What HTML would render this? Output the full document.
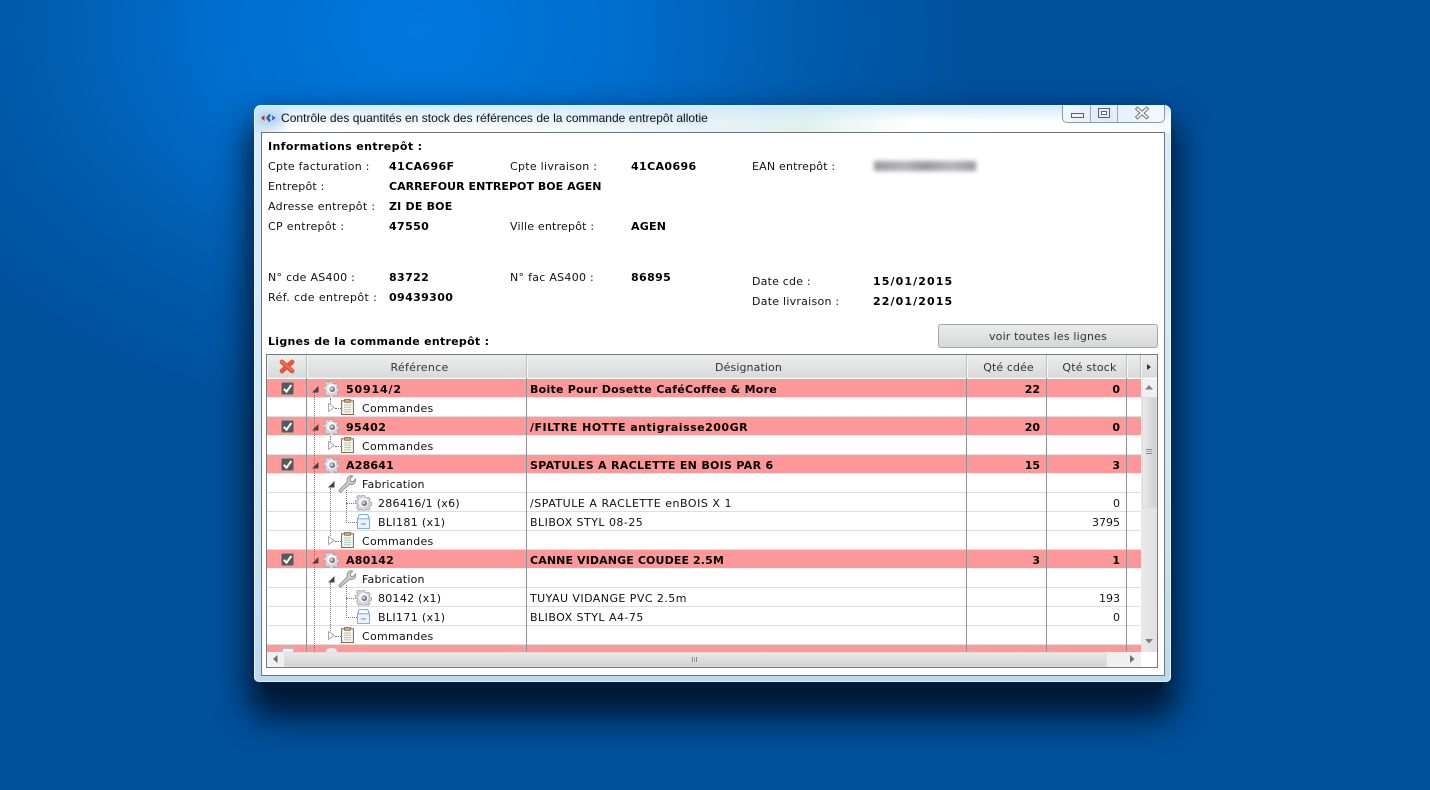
<!DOCTYPE html>
<html lang="fr"><head><meta charset="utf-8"><title>Contrôle</title>
<style>
*{box-sizing:border-box}
html,body{margin:0;padding:0;width:1430px;height:790px;overflow:hidden}
body{position:relative;font-family:"DejaVu Sans","Liberation Sans",sans-serif;font-size:11px;color:#111;
background:radial-gradient(ellipse 560px 400px at 420px 30px,#0078e0 0%,#006dcb 38%,#005aab 72%,rgba(0,81,159,0) 100%),#00509b}
.a{position:absolute}
.t{position:absolute;white-space:nowrap;line-height:14px;height:14px;margin-top:1px;letter-spacing:.28px}
.b{font-weight:bold;color:#000;letter-spacing:.38px}
#shadow{left:262px;top:120px;width:901px;height:572px;background:#001a38;box-shadow:0 12px 32px 14px rgba(0,18,42,.9);border-radius:10px}
#win{left:254px;top:105px;width:917px;height:577px;border-radius:7px 7px 5px 5px;background:linear-gradient(#d8eef9,#cfe6f5 60%,#bcdaef);box-shadow:inset 0 0 0 1px #e8f4fb}
#glass{left:255px;top:106px;width:915px;height:27px;border-radius:6px 6px 0 0;background:linear-gradient(rgba(205,232,248,.9) 0,rgba(255,255,255,0) 55%),linear-gradient(90deg,#cfe8f8 0,#ffffff 4%,#f6fbfd 30%,#e6f3f6 50%,#dff1ef 60%,#ffffff 72%,#f8fcfe 100%)}
#content{left:261px;top:132px;width:904px;height:544px;background:#fff;border:1px solid #6f7579}
#ctl{left:1062px;top:105px;width:103px;height:18px;border:1px solid #8d9aa3;border-top:0;border-radius:0 0 5px 5px;background:linear-gradient(90deg,#f2f9fd,#dbe9f8 45%,#e4f0fa 50%,#f4f9fc)}
#btn{left:938px;top:324px;width:220px;height:24px;border:1px solid #a6a6a6;border-radius:3px;background:linear-gradient(#ececec,#d6d7d8);text-align:center;line-height:24px;color:#333;letter-spacing:.17px}
#grid{left:266px;top:354px;width:892px;height:314px;border:1px solid #77797b;background:#fff}
.hd{position:absolute;top:355px;height:23px;padding-left:4px;background:linear-gradient(#ededed,#d8d9d9);border-right:1px solid #bfc0c2;box-shadow:inset 1px 0 0 #f6f6f6,inset 0 -1px 0 #e6e6e6;text-align:center;line-height:25px;color:#333;letter-spacing:.2px}
.row{position:absolute;left:267px;width:874px;height:19px}
.p{background:#ff9999;border-bottom:1px solid #f3f3f3}
.w{background:#fff;border-bottom:1px solid #dedede}
.v{position:absolute;top:378px;width:1px;height:274px;background:#8e9196}
.n{position:absolute;text-align:right;width:76px;left:964px;line-height:14px;white-space:nowrap;margin-top:1px;letter-spacing:0}
.n2{left:1044px}
.dv{position:absolute;width:0;border-left:1px dotted #777}
.dh{position:absolute;height:0;border-top:1px dotted #777}
svg{position:absolute;overflow:visible}
</style></head><body>
<svg width="0" height="0" style="position:absolute"><defs>
<symbol id="gear" viewBox="0 0 18 18"><path d="M7.400 .8h3.200l.5 2.400 1.500.7 2.200-1.200 2.200 2.300-1.200 2 .6 1.600 2.300.5v3.200l-2.300.5-.7 1.500 1.200 2.100-2.200 2.200-2.100-1.200-1.500.6-.5 2.300H7.400l-.5-2.300-1.500-.7-2.100 1.200L1 14.100l1.200-2-.6-1.500-2.300-.6V6.800l2.300-.5.7-1.500L1 2.700 3.200.5l2.200 1.200 1.500-.6z" transform="translate(.8 .8) scale(.9)" fill="#d4d4da" stroke="#9b9ba6" stroke-width=".8"/><circle cx="9" cy="9" r="5" fill="#f6f6f8"/><circle cx="9.800" cy="9.800" r="3" fill="#77777f"/><circle cx="9.200" cy="9.200" r="1.700" fill="#c8c8d0"/></symbol>
<symbol id="clip" viewBox="0 0 13 16"><rect x=".6" y="1.800" width="11.800" height="13.700" fill="#fbfbf4" stroke="#8a6248" stroke-width="1"/><rect x="3.600" y=".5" width="5.800" height="2.800" fill="#cfa77f" stroke="#7c5535" stroke-width=".7"/><path d="M3 6h7M3 8.300h7M3 10.600h7M3 12.900h7" stroke="#a8c4b4" stroke-width="1"/></symbol>
<symbol id="wr" viewBox="0 0 18 18"><path d="M2.500 17.200.8 15.500l8.400-8.600c-.5-2.500.2-4.400 2-5.500 1.200-.7 2.500-.8 3.700-.4l-2.700 2.700.5 2.400 2.300.5 2.600-2.600c.4 1.500 0 3-1.100 4.200-1.300 1.300-3 1.600-4.900 1z" fill="#cecece" stroke="#8c8c8c" stroke-width=".9"/></symbol>
<symbol id="box" viewBox="0 0 13 15"><path d="M2.300.6h8.400l1.700 3.900v9.900H.6V4.500z" fill="#fff" stroke="#6ba4f2" stroke-width="1"/><path d="M.6 4.800h11.800" stroke="#6ba4f2"/><rect x="1.300" y="5.500" width="10.400" height="8.300" fill="#eef4fe"/><rect x="4.200" y="9.300" width="4.600" height="1.300" fill="#6ba4f2"/></symbol>
<symbol id="chk" viewBox="0 0 13 13"><rect x=".5" y=".5" width="12" height="12" rx="1.500" fill="#55585c" stroke="#8a8a8a"/><path d="M2.800 6.800l2.700 2.900 4.800-6.700" fill="none" stroke="#fff" stroke-width="2"/></symbol>
<symbol id="ta" viewBox="0 0 7 7"><path d="M0 6.500 6.500 0v6.500z" fill="#444"/></symbol>
<symbol id="to" viewBox="0 0 7 9"><path d="M.5.500 6 4.500.5 8.500z" fill="#fff" stroke="#a9a9a9"/></symbol>
</defs></svg>

<div class="a" id="shadow"></div>
<div class="a" id="win"></div>
<div class="a" id="glass"></div>

<div class="a" style="left:258px;top:111px;width:24px;height:16px;background:#9fc4e6;filter:blur(4px);opacity:.6"></div>
<svg style="left:260px;top:113px" width="16" height="10" viewBox="0 0 16 10"><path d="M4.500 2 1 5l3.500 3z" fill="#d3202f"/><path d="M9.500 .5 6 5l3.500 4.500 1-2.500L9 5l1.500-2zM11.500 2l4 3-4 3 1-3z" fill="#1f5fae"/></svg>
<div class="t" style="left:281px;top:110px;font-family:'Liberation Sans',sans-serif;font-size:12px;color:#111;letter-spacing:.025px;text-shadow:0 1px 6px rgba(130,175,215,.45)">Contrôle des quantités en stock des références de la commande entrepôt allotie</div>

<div class="a" id="ctl"></div>
<div class="a" style="left:1090px;top:105px;width:1px;height:17px;background:#9aa7af"></div>
<div class="a" style="left:1117px;top:105px;width:1px;height:17px;background:#9aa7af"></div>
<div class="a" style="left:1071px;top:113px;width:13px;height:5px;border:1px solid #5f6469;background:#f2f2f2"></div>
<div class="a" style="left:1098px;top:108px;width:12px;height:10px;border:1px solid #5f6469;background:#e6edf2"></div>
<div class="a" style="left:1101px;top:111px;width:6px;height:4px;border:1px solid #5f6469;background:#fff"></div>
<svg style="left:1136px;top:108px" width="12" height="10" viewBox="0 0 12 10"><path d="M1.500 1 10.500 9M10.500 1 1.500 9" stroke="#6b7075" stroke-width="3.800" stroke-linecap="square"/><path d="M1.500 1 10.500 9M10.500 1 1.500 9" stroke="#f2f2f2" stroke-width="1.900" stroke-linecap="square"/></svg>

<div class="a" id="content"></div>

<div class="t b" style="left:268px;top:139px">Informations entrepôt :</div>
<div class="t" style="left:268px;top:159px">Cpte facturation :</div><div class="t b" style="left:389px;top:159px">41CA696F</div>
<div class="t" style="left:510px;top:159px">Cpte livraison :</div><div class="t b" style="left:631px;top:159px">41CA0696</div>
<div class="t" style="left:752px;top:159px;letter-spacing:.2px">EAN entrepôt :</div>
<div class="a" style="left:874px;top:161px;width:102px;height:10px;background:linear-gradient(90deg,#85858c,#a6a6ac 30%,#84848a 50%,#a8a8ae 75%,#86868c);filter:blur(2.500px);opacity:.85"></div>
<div class="t" style="left:268px;top:179px;letter-spacing:.2px">Entrepôt :</div><div class="t b" style="left:389px;top:179px;letter-spacing:.04px">CARREFOUR ENTREPOT BOE AGEN</div>
<div class="t" style="left:268px;top:199px;letter-spacing:.33px">Adresse entrepôt :</div><div class="t b" style="left:389px;top:199px;letter-spacing:.2px">ZI DE BOE</div>
<div class="t" style="left:268px;top:219px;letter-spacing:.33px">CP entrepôt :</div><div class="t b" style="left:389px;top:219px">47550</div>
<div class="t" style="left:510px;top:219px;letter-spacing:.2px">Ville entrepôt :</div><div class="t b" style="left:631px;top:219px;letter-spacing:.25px">AGEN</div>
<div class="t" style="left:268px;top:270px">N° cde AS400 :</div><div class="t b" style="left:389px;top:270px">83722</div>
<div class="t" style="left:510px;top:270px">N° fac AS400 :</div><div class="t b" style="left:631px;top:270px">86895</div>
<div class="t" style="left:752px;top:274px;letter-spacing:.2px">Date cde :</div><div class="t b" style="left:873px;top:274px;letter-spacing:1.1px">15/01/2015</div>
<div class="t" style="left:268px;top:290px;letter-spacing:.4px">Réf. cde entrepôt :</div><div class="t b" style="left:389px;top:290px">09439300</div>
<div class="t" style="left:752px;top:294px;letter-spacing:.25px">Date livraison :</div><div class="t b" style="left:873px;top:294px;letter-spacing:1.1px">22/01/2015</div>
<div class="t b" style="left:268px;top:334px;letter-spacing:.28px">Lignes de la commande entrepôt :</div>
<div class="a" id="btn">voir toutes les lignes</div>

<div class="a" id="grid"></div>
<div class="hd" style="left:267px;width:40px"></div>
<div class="hd" style="left:307px;width:220px;padding-left:6px;letter-spacing:.3px">Référence</div>
<div class="hd" style="left:527px;width:440px;letter-spacing:.1px">Désignation</div>
<div class="hd" style="left:967px;width:80px;letter-spacing:.1px">Qté cdée</div>
<div class="hd" style="left:1047px;width:80px;padding-left:6px">Qté stock</div>
<div class="hd" style="left:1127px;width:14px;padding:0"></div>
<div class="hd" style="left:1141px;width:16px;padding:0;border-right:0"></div>
<svg style="left:1147px;top:364px" width="4" height="6" viewBox="0 0 4 6"><path d="M0 0 4 3 0 6z" fill="#333"/></svg>
<svg style="left:279px;top:359px" width="16" height="15" viewBox="0 0 16 15"><path d="M3 3 13 12M13 3 3 12" stroke="#dd5a40" stroke-width="4.800" stroke-linecap="round"/><path d="M3 2.500 13 11.500" stroke="#ee8068" stroke-width="1.200" stroke-linecap="round"/></svg>

<!-- rows -->
<div class="row p" style="top:379px"></div><div class="row w" style="top:398px"></div>
<div class="row p" style="top:417px"></div><div class="row w" style="top:436px"></div>
<div class="row p" style="top:455px"></div><div class="row w" style="top:474px"></div>
<div class="row w" style="top:493px"></div><div class="row w" style="top:512px"></div>
<div class="row w" style="top:531px"></div><div class="row p" style="top:550px"></div>
<div class="row w" style="top:569px"></div><div class="row w" style="top:588px"></div>
<div class="row w" style="top:607px"></div><div class="row w" style="top:626px"></div>
<div class="row p" style="top:645px;height:7px;border:0"></div>

<div class="v" style="left:306px"></div><div class="v" style="left:526px"></div><div class="v" style="left:966px"></div><div class="v" style="left:1046px"></div><div class="v" style="left:1126px"></div>

<!-- tree lines -->
<div class="dv" style="left:314px;top:392px;height:260px"></div>
<div class="dv" style="left:330px;top:398px;height:6px"></div>
<div class="dv" style="left:330px;top:436px;height:6px"></div>
<div class="dv" style="left:330px;top:488px;height:48px"></div>
<div class="dv" style="left:330px;top:583px;height:48px"></div>
<div class="dv" style="left:346px;top:490px;height:33px"></div>
<div class="dv" style="left:346px;top:585px;height:33px"></div>
<div class="dh" style="left:335px;top:408px;width:6px"></div><div class="dh" style="left:335px;top:446px;width:6px"></div>
<div class="dh" style="left:335px;top:541px;width:6px"></div><div class="dh" style="left:335px;top:636px;width:6px"></div>
<div class="dh" style="left:346px;top:503px;width:10px"></div><div class="dh" style="left:346px;top:522px;width:11px"></div>
<div class="dh" style="left:346px;top:598px;width:10px"></div><div class="dh" style="left:346px;top:617px;width:11px"></div>

<!-- checks -->
<svg style="left:281px;top:382px" width="13" height="13"><use href="#chk"/></svg>
<svg style="left:281px;top:420px" width="13" height="13"><use href="#chk"/></svg>
<svg style="left:281px;top:458px" width="13" height="13"><use href="#chk"/></svg>
<svg style="left:281px;top:553px" width="13" height="13"><use href="#chk"/></svg>
<!-- arrows -->
<svg style="left:312px;top:386px" width="7" height="7"><use href="#ta"/></svg>
<svg style="left:312px;top:424px" width="7" height="7"><use href="#ta"/></svg>
<svg style="left:312px;top:462px" width="7" height="7"><use href="#ta"/></svg>
<svg style="left:312px;top:557px" width="7" height="7"><use href="#ta"/></svg>
<svg style="left:328px;top:481px" width="7" height="7"><use href="#ta"/></svg>
<svg style="left:328px;top:576px" width="7" height="7"><use href="#ta"/></svg>
<svg style="left:328px;top:403px" width="7" height="9"><use href="#to"/></svg>
<svg style="left:328px;top:441px" width="7" height="9"><use href="#to"/></svg>
<svg style="left:328px;top:536px" width="7" height="9"><use href="#to"/></svg>
<svg style="left:328px;top:631px" width="7" height="9"><use href="#to"/></svg>
<!-- icons -->
<svg style="left:323px;top:380px" width="17" height="17"><use href="#gear"/></svg>
<svg style="left:323px;top:418px" width="17" height="17"><use href="#gear"/></svg>
<svg style="left:323px;top:456px" width="17" height="17"><use href="#gear"/></svg>
<svg style="left:323px;top:551px" width="17" height="17"><use href="#gear"/></svg>
<svg style="left:355px;top:494px" width="17" height="17"><use href="#gear"/></svg>
<svg style="left:355px;top:589px" width="17" height="17"><use href="#gear"/></svg>
<svg style="left:341px;top:399px" width="13" height="16"><use href="#clip"/></svg>
<svg style="left:341px;top:437px" width="13" height="16"><use href="#clip"/></svg>
<svg style="left:341px;top:532px" width="13" height="16"><use href="#clip"/></svg>
<svg style="left:341px;top:627px" width="13" height="16"><use href="#clip"/></svg>
<svg style="left:338px;top:475px" width="18" height="18"><use href="#wr"/></svg>
<svg style="left:338px;top:570px" width="18" height="18"><use href="#wr"/></svg>
<svg style="left:357px;top:514px" width="13" height="15"><use href="#box"/></svg>
<svg style="left:357px;top:609px" width="13" height="15"><use href="#box"/></svg>

<!-- text -->
<div class="t b" style="left:346px;top:382px;letter-spacing:.85px">50914/2</div><div class="t b" style="left:530px;top:382px;letter-spacing:.25px">Boite Pour Dosette CaféCoffee &amp; More</div><div class="n b" style="top:382px;letter-spacing:0">22</div><div class="n n2 b" style="top:382px;letter-spacing:0">0</div>
<div class="t" style="left:362px;top:401px">Commandes</div>
<div class="t b" style="left:346px;top:420px;letter-spacing:.4px">95402</div><div class="t b" style="left:530px;top:420px;letter-spacing:.5px">/FILTRE HOTTE antigraisse200GR</div><div class="n b" style="top:420px;letter-spacing:0">20</div><div class="n n2 b" style="top:420px;letter-spacing:0">0</div>
<div class="t" style="left:362px;top:439px">Commandes</div>
<div class="t b" style="left:346px;top:458px;letter-spacing:.2px">A28641</div><div class="t b" style="left:530px;top:458px;letter-spacing:.3px">SPATULES A RACLETTE EN BOIS PAR 6</div><div class="n b" style="top:458px;letter-spacing:0">15</div><div class="n n2 b" style="top:458px;letter-spacing:0">3</div>
<div class="t" style="left:362px;top:477px;letter-spacing:.2px">Fabrication</div>
<div class="t" style="left:378px;top:496px">286416/1 (x6)</div><div class="t" style="left:530px;top:496px;letter-spacing:.53px">/SPATULE A RACLETTE enBOIS X 1</div><div class="n n2" style="top:496px">0</div>
<div class="t" style="left:378px;top:515px;letter-spacing:.36px">BLI181 (x1)</div><div class="t" style="left:530px;top:515px;letter-spacing:.47px">BLIBOX STYL 08-25</div><div class="n n2" style="top:515px">3795</div>
<div class="t" style="left:362px;top:534px">Commandes</div>
<div class="t b" style="left:346px;top:553px;letter-spacing:.2px">A80142</div><div class="t b" style="left:530px;top:553px;letter-spacing:.12px">CANNE VIDANGE COUDEE 2.5M</div><div class="n b" style="top:553px;letter-spacing:0">3</div><div class="n n2 b" style="top:553px;letter-spacing:0">1</div>
<div class="t" style="left:362px;top:572px;letter-spacing:.2px">Fabrication</div>
<div class="t" style="left:378px;top:591px">80142 (x1)</div><div class="t" style="left:530px;top:591px;letter-spacing:.45px">TUYAU VIDANGE PVC 2.5m</div><div class="n n2" style="top:591px">193</div>
<div class="t" style="left:378px;top:610px;letter-spacing:.36px">BLI171 (x1)</div><div class="t" style="left:530px;top:610px;letter-spacing:.47px">BLIBOX STYL A4-75</div><div class="n n2" style="top:610px">0</div>
<div class="t" style="left:362px;top:629px">Commandes</div>

<!-- peeking icons in the cut-off row -->
<div class="a" style="left:282px;top:648px;width:12px;height:4px;background:#f0f0f0;border:1px solid #bbb;border-bottom:0"></div>
<div class="a" style="left:326px;top:648px;width:11px;height:4px;background:#e8e8ee;border-radius:4px 4px 0 0"></div>

<!-- v scrollbar -->
<div class="a" style="left:1141px;top:379px;width:16px;height:273px;background:linear-gradient(90deg,#eaeaea,#e0e0e0)"></div>
<div class="a" style="left:1141px;top:379px;width:16px;height:18px;background:#f0f0f0"></div>
<svg style="left:1145px;top:385px" width="8" height="5" viewBox="0 0 8 5"><path d="M4 0 8 4.500H0z" fill="#808080"/></svg>
<div class="a" style="left:1142px;top:397px;width:15px;height:111px;background:linear-gradient(90deg,#e9e9e9,#cfcfcf);border:1px solid #dcdcdc"></div>
<div class="a" style="left:1146px;top:449px;width:6px;height:1px;background:#888;box-shadow:0 2px 0 #aaa,0 4px 0 #888"></div>
<svg style="left:1145px;top:639px" width="8" height="5" viewBox="0 0 8 5"><path d="M0 0H8L4 4.500z" fill="#808080"/></svg>
<!-- h scrollbar -->
<div class="a" style="left:267px;top:652px;width:874px;height:15px;background:#f0f0f0"></div>
<div class="a" style="left:284px;top:652px;width:823px;height:15px;background:linear-gradient(#e8e8e8,#d2d2d2);border:1px solid #dedede"></div>
<div class="a" style="left:692px;top:657px;width:1px;height:5px;background:#888;box-shadow:2px 0 0 #aaa,4px 0 0 #888"></div>
<svg style="left:273px;top:655px" width="5" height="8" viewBox="0 0 5 8"><path d="M4.500 0V8L0 4z" fill="#6e6e6e"/></svg>
<svg style="left:1130px;top:655px" width="5" height="8" viewBox="0 0 5 8"><path d="M0 0V8L4.500 4z" fill="#6e6e6e"/></svg>
<div class="a" style="left:1141px;top:652px;width:16px;height:15px;background:#fff"></div>
</body></html>
